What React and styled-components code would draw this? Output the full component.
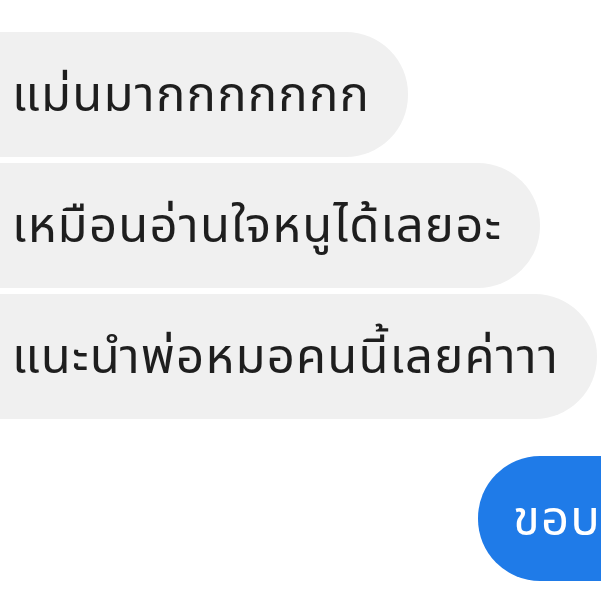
import React from 'react';
import styled, { createGlobalStyle } from 'styled-components';

const GlobalStyle = createGlobalStyle`
	html, body {
		margin: 0;
		padding: 0;
		background: #ffffff;
		overflow: hidden;
	}
	body {
		font-family: "Noto Sans Thai", "Noto Sans", "DejaVu Sans", sans-serif;
	}
`;

const Thread = styled.div`
	width: 601px;
	height: 601px;
	overflow: hidden;
	display: flex;
	flex-direction: column;
	padding-top: 32px;
	box-sizing: border-box;
`;
Thread.displayName = 'Thread';

const Row = styled.div`
	display: flex;
	margin-top: ${props => (props.mine ? '37px' : '6px')};
	margin-left: ${props => (props.mine ? '478px' : '-60px')};
	&:first-child {
		margin-top: 0;
	}
`;
Row.displayName = 'Row';

const Bubble = styled.div`
	flex: none;
	height: 125px;
	display: flex;
	align-items: center;
	box-sizing: border-box;
	padding: ${props => (props.mine ? '4px 60px 0 35px' : '4px 38px 0 72px')};
	border-radius: 62px;
	background: ${props => (props.mine ? '#1f7be8' : '#f0f0f0')};
	color: ${props => (props.mine ? '#ffffff' : '#1e1e1e')};
	font-size: 49px;
	letter-spacing: 1.2px;
	line-height: 1.2;
	white-space: nowrap;
`;
Bubble.displayName = 'Bubble';

const messages = [
	{ text: 'แม่นมากกกกกกก' },
	{ text: 'เหมือนอ่านใจหนูได้เลยอะ' },
	{ text: 'แนะนำพ่อหมอคนนี้เลยค่าาา' },
	{ text: 'ขอบคุณค่ะ', mine: true }
];

export default function App() {
	return (
		<React.Fragment>
			<GlobalStyle />
			<Thread>
				{messages.map(message => (
					<Row key={message.text} mine={message.mine}>
						<Bubble mine={message.mine}>{message.text}</Bubble>
					</Row>
				))}
			</Thread>
		</React.Fragment>
	);
}
